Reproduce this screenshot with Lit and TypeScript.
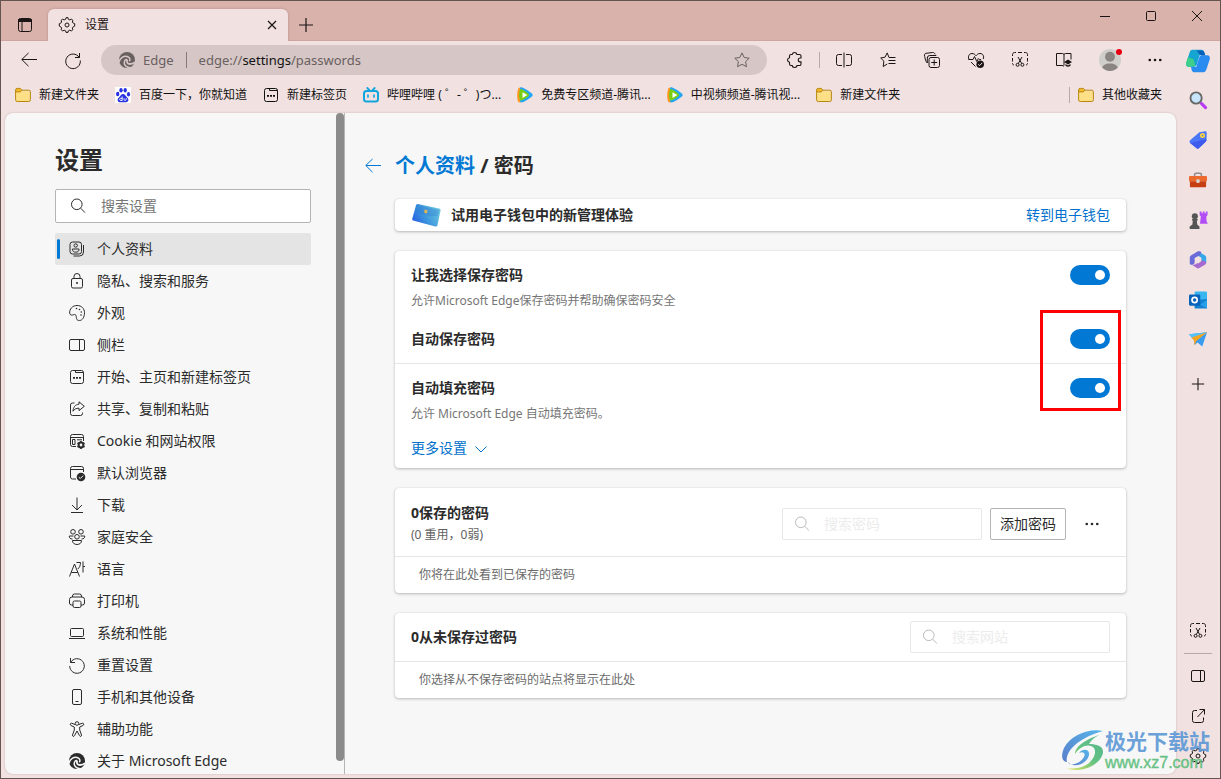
import { LitElement, html, svg, css, nothing, TemplateResult } from "lit";
import { customElement, property } from "lit/decorators.js";
import { classMap } from "lit/directives/class-map.js";

/* ---------- icon set: every glyph is drawn on a 16 x 16 grid ---------- */

const GEAR = svg`<path d="M6.7 2.2 7 .7h2l.3 1.5 1.5.7 1.6-.7 1.5 1.1-.5 1.7.9 1.2 1.4.5v2.4l-1.4.6-.9 1.4.5 1.6-1.5 1.2-1.6-.7-1.5.7-.3 1.5H7l-.3-1.5-1.5-.7-1.6.7-1.5-1.2.5-1.6-.9-1.4-1.4-.6V6.7l1.4-.5.9-1.2-.5-1.7 1.5-1.1 1.6.7z"/><circle cx="8" cy="8" r="2"/>`;
const SCISSORS_BOX = svg`<path d="M.5 4V2.600C.5 1.500 1.400.5 2.500.5H4M6 .5h4M12 .5h1.500c1.100 0 2 .900 2 2V4M15.500 6v3.500M15.500 11v.500c0 .800-.700 1.500-1.500 1.500M.5 6v3.500M.5 11v.500c0 .800.700 1.500 1.500 1.500"/><path d="M6 5l3.700 6.500M10 5l-3.700 6.500"/><circle cx="5.600" cy="12.800" r="1.500"/><circle cx="10.400" cy="12.800" r="1.500"/>`;
const SWIRL = svg`<circle cx="8" cy="8" r="8" fill="currentColor" stroke="none"/><path d="M0 10.500C.800 5.500 5.500 3.300 9 4.800c2 1 2.600 3.200 1.200 4.400" stroke="var(--cut)" stroke-width="1.500"/><path d="M12.500 15.800C7 16.200 4.300 12.200 5.500 9.200c.600-1.500 1.800-2 2.600-1.600" stroke="var(--cut)" stroke-width="1.500"/><path d="M8.300 7.600c-1.200 2.400.200 4.400 2.700 4.400 1.800 0 3.600-.600 5-1.900" stroke="var(--cut)" stroke-width="1.800"/>`;
const NEW_TAB = svg`<rect x="1.500" y="1.500" width="13" height="13" rx="2"/><path d="M6.500 1.500v2h8"/><path d="M4 8.800h2M7 8.800h2M10 8.800h2" stroke-width="1.800"/>`;
const PANEL = svg`<rect x=".5" y="2.500" width="15" height="11" rx="1.500"/><path d="M10.500 2.500v11"/>`;
const SEARCH = svg`<circle cx="6.800" cy="6.300" r="5.300"/><path d="M10.700 10.200 15 14.600"/>`;
const DOTS = svg`<g fill="currentColor" stroke="none"><circle cx="2" cy="8" r="1.500"/><circle cx="8" cy="8" r="1.500"/><circle cx="14" cy="8" r="1.500"/></g>`;
const FOLDER = svg`<path d="M.600 4.200h14.200v8.600a1.700 1.700 0 0 1-1.700 1.700H2.300A1.700 1.700 0 0 1 .600 12.800z" fill="#fddf86" stroke="none"/><path d="M.600 3A1.600 1.600 0 0 1 2.200 1.400h3L7 3.200 5.400 4.900H.600z" fill="#f3b92c" stroke="none"/><path d="M.600 3A1.600 1.600 0 0 1 2.200 1.400h3L7 3.200h6.800a1.600 1.600 0 0 1 1.600 1.600v8a1.700 1.700 0 0 1-1.700 1.700H2.300A1.700 1.700 0 0 1 .600 12.800zM.600 4.900h4.700L7 3.200" stroke="#b8860f"/>`;
const PLAY = svg`<path d="M4.500.9C2.900 0 1.300.7 1 2.500-.1 6 .0 11 .9 14c.4 1.500 1.800 1.700 3.200 1z" fill="#ff9420" stroke="none"/><path d="M3 .9c1-.9 2-.5 3.400.1 3.200 1.500 6 3.300 8.500 5.500 1.100 1 1.100 2.100 0 3.100-2.500 2.200-5.300 4-8.500 5.400-1.300.6-2.700.8-3.400-.4z" fill="#25a5f5" stroke="none"/><path d="M2.600 3.500c.4-1.100 1.200-1.400 2.400-.9 2.400 1.100 4.300 2.300 6.100 3.900 1.100 1 1.100 2 0 3-1.800 1.500-3.700 2.800-6.100 3.800-1.200.5-2 .1-2.400-1-.7-3-.7-5.800 0-8.800z" fill="#78ce12" stroke="none"/><path d="M5.500 5.200 10.300 8l-4.800 2.900z" fill="#fff" stroke="none"/>`;

const ICONS: Record<string, TemplateResult<2>> = {
  gear: GEAR,
  snip: SCISSORS_BOX,
  edge: SWIRL,
  newtab: NEW_TAB,
  panel: PANEL,
  search: SEARCH,
  dots: DOTS,
  folder: FOLDER,
  play: PLAY,
  workspaces: svg`<rect x="1.500" y="1.500" width="13" height="13" rx="2"/><path d="M1.500 2.500h13v2h-13z" fill="currentColor"/><path d="M5 4.500v10"/>`,
  close: svg`<path d="M4 4l8 8M12 4l-8 8" stroke-width="1.200"/>`,
  plus: svg`<path d="M8 1v14M1 8h14" stroke-width="1.200"/>`,
  minimize: svg`<path d="M3 8.500h10"/>`,
  maximize: svg`<rect x="3.500" y="3.500" width="9" height="9" rx="1"/>`,
  winclose: svg`<path d="M3 3l10 10M13 3 3 13"/>`,
  back: svg`<path d="M16 7.500H.8M7.500 1 .8 7.500l6.700 6.700"/>`,
  reload: svg`<path d="M14.500 1v4.500h-4.500M14.200 5.400A7.300 7.300 0 1 0 15.300 8.500"/>`,
  star: svg`<path d="M8 .9l2.200 4.600 5 .7-3.600 3.500.9 5L8 12.300l-4.500 2.400.9-5L.8 6.200l5-.7z"/>`,
  puzzle: svg`<path d="M5.200 2.500C5.500 1.200 6.300.5 7.500.5s2.200.7 2.400 2h2.600a1.500 1.500 0 0 1 1.500 1.500v2h-.8a1.900 1.900 0 0 0 0 3.900h.8V12a1.500 1.500 0 0 1-1.500 1.500H10c-.1 1.200-1.100 2-2.400 2s-2.300-.8-2.400-2H4A1.500 1.500 0 0 1 2.500 12v-1.800C1.200 10 .5 9.200.5 8s.700-2 2-2.200V4A1.500 1.500 0 0 1 4 2.500z" stroke-width="1.100"/>`,
  split: svg`<path d="M6 2.500H2.500a2 2 0 0 0-2 2v7a2 2 0 0 0 2 2H6M10 2.500h3.500a2 2 0 0 1 2 2v7a2 2 0 0 1-2 2H10M8 .5v15"/>`,
  favs: svg`<path d="M9 5.500 7.200.9 5 5.200.7 6l3.200 3.200-.7 5.300 4-2.500"/><path d="M9 5.500h6.500M8.500 8.500h7M8.500 11.500h7"/>`,
  collections: svg`<rect x="5" y="5.500" width="10.500" height="10" rx="2"/><path d="M10.200 7.500v6M7.200 10.500h6"/><path d="M3.300 11C1.500 9.800.5 4 .5 3c0-1 .6-1.500 1.500-1.700L8.700.5c1.300 0 2 .6 2.300 1.800M3.300 11V6a2.500 2.500 0 0 1 2.500-2.500h6.500"/>`,
  health: svg`<path d="M1.500 8C-.5 5.500.5 1.500 4 1.500c2 0 3 1 4 2.200 1-1.200 2-2.200 4-2.200 3.200 0 4.300 3 3.200 5.500M3 10l4.500 4.500M.5 7.500H5l1.500-3 2.300 5 1.500-3 1 1H13"/><circle cx="12.200" cy="12.200" r="3.800" fill="currentColor" stroke="none"/><path d="M10.200 12.300l1.400 1.300 2.600-2.700" stroke="#f1e2e1"/>`,
  reader: svg`<path d="M8 3v10.500M8 3C8 2 7.500 1.500 6.500 1.500h-6v12H6c1 0 1.500.3 2 1M8 3c0-1 .5-1.500 1.500-1.500h5.500V7.500"/><path d="M12 7.500 16 10l-4 2.400L8 10zM9.500 12v1.700c1.500 1.300 3.500 1.300 5 0V12L12 13.500z" fill="currentColor" stroke="none"/>`,
  profile: svg`<path d="M4.500 15h6a4 4 0 0 0 4-4V4"/><rect x="1" y="1" width="11.500" height="12" rx="2.500"/><circle cx="6.700" cy="4.500" r="1.700"/><path d="M3.500 8h6.500v.8c0 1.400-1.300 2.400-3.200 2.400s-3.300-1-3.300-2.400z"/>`,
  lock: svg`<rect x="2.500" y="5.500" width="11" height="9.500" rx="1.500"/><path d="M5 5.500V3.500a3 3 0 0 1 6 0v2"/><circle cx="8" cy="10" r="1" fill="currentColor" stroke="none"/>`,
  palette: svg`<path d="M.7 8.500C.2 4 3.500.5 8 .5c4.500 0 7.500 3 7.500 7.200 0 4.500-2.200 7.800-5 7.800-3.500 0-3-2.500-3.300-4.300C7 9.500 6 9.300 4.600 9.700 3 10.200 1.200 10.500.7 8.500z"/><g fill="currentColor" stroke="none"><circle cx="7.500" cy="3.500" r=".8"/><circle cx="10.500" cy="4.500" r=".8"/><circle cx="12.300" cy="7" r=".8"/><circle cx="12" cy="10" r=".8"/></g>`,
  share: svg`<path d="M5.500 2H3.500a2 2 0 0 0-2 2v8.500a2 2 0 0 0 2 2h8a2 2 0 0 0 2-2v-1"/><path d="M10 .8l5.300 4.500L10 9.600V7.200C7.200 7.200 5.500 8 4 10.200 4.200 6.500 6 3.500 10 3.200z"/>`,
  cookie: svg`<path d="M14.500 8V3.500a2 2 0 0 0-2-2h-9a2 2 0 0 0-2 2v8a2 2 0 0 0 2 2H7M1.500 4.500h13M3.500 6.500h2.500v5H3.500zM8 6.800h5"/><circle cx="12" cy="12" r="2.400" stroke-width="2"/><path d="M12 8v1.500M12 14.500V16M8.500 10l1.300.8M14.200 13.200l1.300.8M8.500 14l1.300-.8M14.200 10.800l1.300-.8" stroke-width="1.600"/>`,
  browser: svg`<path d="M14.500 7V3.500a2 2 0 0 0-2-2h-9a2 2 0 0 0-2 2v8.500a2 2 0 0 0 2 2H7M1.500 4.500h13"/><circle cx="12" cy="12" r="4.300" fill="currentColor" stroke="none"/><path d="M9.800 12.200l1.500 1.300 2.800-2.800" stroke="#f7f7f7"/>`,
  download: svg`<path d="M8 .5v12M3 8l5 5 5-5M2 15.500h12"/>`,
  family: svg`<circle cx="4" cy="2.800" r="2.300"/><circle cx="12" cy="2.800" r="2.300"/><circle cx="8" cy="7.800" r="2.300"/><path d="M3.500 10C1.500 10 0 9 .3 7h4.200M12.500 10c2 0 3.500-1 3.200-3h-4.200M3.500 11.500h9c.2 2.500-2 4-4.500 4s-4.700-1.500-4.500-4z"/>`,
  language: svg`<path d="M.5 15.500 5.500 3l5 12.500M2.300 11.500h6.500M7.500 1.500h4c0 3-1 5-2.700 6.500M14 .5v11M14 5.500h2"/>`,
  printer: svg`<path d="M3.500 4V3a2 2 0 0 1 2-2h5a2 2 0 0 1 2 2v1M4 12H2.500a2 2 0 0 1-2-2V6.500a2.500 2.500 0 0 1 2.500-2.500h10a2.500 2.500 0 0 1 2.500 2.500V10a2 2 0 0 1-2 2H12"/><rect x="4" y="8" width="8" height="6.500" rx="1.500"/>`,
  laptop: svg`<rect x="1.500" y="3.500" width="13" height="8" rx="1"/><path d="M0 13.500h16"/>`,
  reset: svg`<path d="M1.500 1v4.500H6M1.700 5.300A7.300 7.300 0 1 1 .7 9"/>`,
  phone: svg`<rect x="3.500" y=".5" width="9" height="15" rx="1.500"/><path d="M6.500 12.500h3"/>`,
  access: svg`<circle cx="8" cy="2.500" r="1.800"/><path d="M6 3.500 2.700 2.200C1 2 .8 4 2 4.500l3.300 1.500v3L3.500 14c-.3 1.500 1.500 2 2 .7L8 10l2.500 4.700c.5 1.300 2.300.8 2-.7L10.700 9V6L14 4.500c1.200-.5 1-2.500-.7-2.300L10 3.500"/>`,
  external: svg`<path d="M7 2.500H4.500a2 2 0 0 0-2 2v8a2 2 0 0 0 2 2h7a2 2 0 0 0 2-2V9.500M9.500 1.500H14.500v5M14.500 1.500l-7 7.500"/>`,
  sidebar: svg`<rect x="1.500" y="2.500" width="13" height="11" rx="1.500"/><path d="M10.500 2.500v11"/>`,
  chevron: svg`<path d="M2.500 6.500l5.500 5.500 5.500-5.500"/>`,
  baidu: svg`<rect width="16" height="16" fill="#fff" stroke="none"/><g fill="#2932e1" stroke="none"><ellipse cx="2.700" cy="7" rx="1.700" ry="2.200"/><ellipse cx="6" cy="3.200" rx="1.700" ry="2.300"/><ellipse cx="10.200" cy="3.300" rx="1.700" ry="2.300"/><ellipse cx="13.500" cy="7.300" rx="1.600" ry="2.200"/><path d="M8 7c1.800 0 2.500 1.800 3.700 2.900 1.500 1.300 2 2.500 1.500 3.900-.600 1.700-2.700 1.400-5.200 1.400s-4.500.400-5.200-1.300c-.500-1.500.100-2.700 1.600-3.900C5.600 8.900 6.200 7 8 7z"/></g><path d="M7.200 9.500v4H5.700c-1.400 0-1.400-2.200 0-2.200h1.500M9 11.200v1.500c0 .900 2.200.900 2.200 0v-1.500" stroke="#fff" stroke-width=".9"/>`,
  bili: svg`<g stroke="#13a5dd"><rect x="1" y="4" width="14" height="10.500" rx="2.500" stroke-width="2"/><path d="M4.300 1l2 2M11.700 1l-2 2" stroke-width="1.800" stroke-linecap="round"/><path d="M5 8v2M11 8v2" stroke-width="1.700" stroke-linecap="round"/></g>`,
  avatar: svg`<circle cx="8" cy="8" r="8" fill="#d0cecb" stroke="none"/><circle cx="8" cy="5.600" r="3.600" fill="#8a8582" stroke="none"/><path d="M2.300 13.500C3 11.700 4.500 10.500 8 10.500s5 1.200 5.700 3A8 8 0 0 1 8 16a8 8 0 0 1-5.700-2.500z" fill="#8a8582" stroke="none"/>`,
  copilot: svg`<g stroke="none"><path d="M4.300.5h6c1.200 0 1.700.8 2 1.900l.5 1.800H11c-1.200 0-1.900.8-2.300 2L6.900 11.900H1.800C.3 11.900-.2 10.500.2 9L2.300 2.600C2.700 1.300 3.300.5 4.300.5z" fill="#16a4d0"/><path d="M1.300 5.500l3.800 1.300 1.300 5.100H1.800C.3 11.900-.2 10.500.2 9z" fill="#3ecf8b"/><path d="M11.700 15.500h-6c-1.200 0-1.700-.8-2-1.900l-.4-1.700H5c1.200 0 1.900-.8 2.300-2L9.100 4.100h5.100c1.500 0 2 1.400 1.600 2.900l-2.100 6.400c-.4 1.300-1 2.100-2 2.100z" fill="#2a8cf0"/><path d="M7 1h3.300c1.200 0 1.700.7 2 1.600l.5 1.600H9.500z" fill="#0b5fb8"/><path d="M10.700 4.200c-1.200 0-1.700.9-2 2L6.900 11.900H5.200c1.200 0 1.800-.9 2.200-2l1.700-5.700z" fill="#e8f6ff"/></g>`,
  bing: svg`<circle cx="6.300" cy="6.200" r="5" fill="#c7e6fb" stroke="#696969" stroke-width="1.700"/><path d="M9.900 10l1.700 1.500" stroke="#777" stroke-width="1.700"/><path d="M11.200 11.200l3.500 3.500" stroke="#b73cf2" stroke-width="2.800" stroke-linecap="round"/>`,
  tag: svg`<path d="M9.200 1.100 14.300.3c1 0 1.500.6 1.500 1.400l-.3 6.500c0 .6-.3 1-.7 1.400L9 15.200c-.8.8-1.800.8-2.500 0L1 10.600c-.8-.7-.8-1.600 0-2.300z" fill="#4b77f7" stroke="none"/><path d="M1 10.600 15.400 7l.1 1.200c0 .6-.3 1-.7 1.400L9 15.200c-.8.800-1.800.800-2.500 0z" fill="#3f5bee" stroke="none"/><circle cx="12" cy="4" r="1.500" stroke="#ffd43a" stroke-width="1.500"/>`,
  toolbox: svg`<path d="M5 5V3.200C5 2.500 5.500 2 6.200 2h3.600c.700 0 1.200.500 1.200 1.200V5" stroke="#8e8c8c" stroke-width="1.400"/><path d="M0 5.500C0 5 .400 4.500 1 4.500h14c.600 0 1 .500 1 1V9H0z" fill="#ec6a2e" stroke="none"/><path d="M.800 9h14.400v4.500c0 .600-.400 1-1 1H1.800c-.600 0-1-.400-1-1z" fill="#c63e11" stroke="none"/><rect x="6.500" y="7.300" width="3" height="3.400" rx="1" fill="#d8d4d0" stroke="none"/>`,
  chess: svg`<path d="M9.500.5h1.700V2h1V.5h1.700V2h1V.5h1.600v3.200l-1 1v4l1.200 2.600H9.800L10.500 4.700l-1-1z" fill="#b24df5" stroke="none"/><g fill="#555" stroke="none"><circle cx="5.200" cy="4.700" r="2.700"/><path d="M2.700 7.200h5v1.300H6.900l.4 3.500 2 1.700V16H.6v-2.300L3 12l.4-3.500h-.7z"/></g>`,
  m365: svg`<g stroke="none"><path d="M8 .3 14 3.800c.800.500 1.300 1.200 1.300 2V11L11 8.300V6L6.500 3.300z" fill="#35a8ea"/><path d="M8 .300 2 3.800C1.200 4.300.700 5 .700 5.900v5.200c0 .600.800 1.200 1.800 1.200 1.200 0 2.300-.900 2.500-1.800V6.300L10 3.500 11 .800C10 0 9 0 8 .300z" fill="#6a6bd8"/><path d="M2.500 12.300 7 15.200c.700.400 1.500.4 2.200 0l5-3c1-.700 1.300-1.600.9-2.600L11 8.300 5.500 12z" fill="#a56bd0"/><path d="M8 5.200l2.500 1.400v2.900L8 11 5.500 9.500V6.600z" fill="#f1e2e1"/></g>`,
  outlook: svg`<rect x="5" y=".5" width="11" height="14" rx="1" fill="#37b5f1" stroke="none"/><path d="M5 8l11-1v8.500H5z" fill="#1482d2" stroke="none"/><path d="M10 12l6-4v7.500z" fill="#27a0ea" stroke="none"/><rect x="0" y="3" width="10" height="10" rx="1" fill="#0a63b8" stroke="none"/><circle cx="5" cy="8" r="2.300" stroke="#fff" stroke-width="1.500"/>`,
  drop: svg`<path d="M0 2.800 16 1 11.800 13.800 7.600 10.300 5 12.500 4.300 8z" fill="#3a9cf0" stroke="none"/><path d="M0 2.800 16 1 4.300 8z" fill="#55c2fa" stroke="none"/><path d="M2 6l14-5-9.700 8L5 12.800 4.300 8z" fill="#f8a51b" stroke="none"/>`,
};

function icon(name: string, size = 16) {
  return html`<svg class="ico" viewBox="0 0 16 16" width=${size} height=${size} fill="none" stroke="currentColor" aria-hidden="true">${ICONS[name]}</svg>`;
}

const base = css`
  :host, * { box-sizing: border-box; }
  .ico { display: block; flex: none; overflow: visible; }
  button, input { font: inherit; color: inherit; margin: 0; }
  button { padding: 0; border: 0; background: none; display: grid; place-items: center; }
  a { color: inherit; text-decoration: none; }
`;

/* ---------- window caption with the tab strip ---------- */

@customElement("tab-strip")
class TabStrip extends LitElement {
  static styles = [base, css`
    :host { display: flex; height: 40px; background: #d9b2ac; color: #1b1414; box-shadow: inset 0 -1px #cfa49f; }
    .work { width: 47px; padding-top: 8px; }
    .tab { display: flex; align-items: center; gap: 10px; width: 240px; margin-top: 8px; padding: 0 8px 0 11px; border-radius: 6px 6px 0 0; background: #f1e2e1; box-shadow: 0 0 3px #b98f8a; clip-path: inset(-4px -4px 0 -4px); }
    .name { flex: 1; font-size: 12px; line-height: 16px; }
    .new { width: 36px; padding-top: 7px; }
    .window { display: flex; margin-left: auto; }
    .window button { width: 46px; height: 30px; }
  `];
  render() {
    return html`
      <button class="work" aria-label="标签页操作">${icon("workspaces")}</button>
      <div class="tab">${icon("gear")}<span class="name">设置</span><button aria-label="关闭标签页">${icon("close")}</button></div>
      <button class="new" aria-label="新建标签页">${icon("plus")}</button>
      <div class="window">
        <button aria-label="最小化">${icon("minimize")}</button>
        <button aria-label="最大化">${icon("maximize")}</button>
        <button aria-label="关闭">${icon("winclose")}</button>
      </div>`;
  }
}

/* ---------- address bar row ---------- */

@customElement("tool-bar")
class ToolBar extends LitElement {
  static styles = [base, css`
    :host { display: flex; align-items: center; height: 38px; padding-left: 6px; color: #1b1414; }
    .btn { width: 44px; height: 38px; flex: none; }
    .address { display: flex; align-items: center; flex: 1; height: 30px; margin: 0 6px; padding: 0 17px 0 18px; border-radius: 15px; background: #d6c7c6; color: #696060; font-size: 14px; line-height: 20px; --cut: #d6c7c6; }
    .site { margin-left: 8px; font-size: 13px; }
    .bar { width: 1px; height: 16px; margin: 0 12px; background: #857b7a; }
    .path { flex: 1; font-size: 13px; }
    .path b { color: #111; font-weight: 400; }
    .sep { width: 1px; height: 16px; margin: 0 2px; background: #b9a9a8; flex: none; }
    .person { position: relative; width: 48px; height: 38px; flex: none; }
    .dot { position: absolute; top: 8px; right: 12px; width: 6px; height: 6px; border-radius: 50%; background: #e6000f; }
    .more { width: 42px; height: 38px; }
  `];
  render() {
    return html`
      <button class="btn" aria-label="返回">${icon("back")}</button>
      <button class="btn" aria-label="刷新">${icon("reload")}</button>
      <div class="address">
        ${icon("edge")}<span class="site">Edge</span><span class="bar"></span>
        <span class="path">edge://<b>settings</b>/passwords</span>
        <button aria-label="收藏">${icon("star")}</button>
      </div>
      <button class="btn" aria-label="扩展">${icon("puzzle")}</button>
      <span class="sep"></span>
      ${["split", "favs", "collections", "health", "snip", "reader"].map((n) => html`<button class="btn" aria-label=${n}>${icon(n)}</button>`)}
      <button class="person" aria-label="个人资料">${icon("avatar", 22)}<span class="dot"></span></button>
      <button class="more" aria-label="更多">${icon("dots", 14)}</button>`;
  }
}

/* ---------- favourites row ---------- */

const MARKS: [string, string][] = [
  ["folder", "新建文件夹"],
  ["baidu", "百度一下，你就知道"],
  ["newtab", "新建标签页"],
  ["bili", "哔哩哔哩 ( ゜- ゜)つ..."],
  ["play", "免费专区频道-腾讯..."],
  ["play", "中视频频道-腾讯视..."],
  ["folder", "新建文件夹"],
];

@customElement("favorites-bar")
class FavoritesBar extends LitElement {
  static styles = [base, css`
    :host { display: flex; align-items: center; height: 33px; padding: 0 6px 2px; color: #111; font-size: 12px; line-height: 16px; white-space: nowrap; }
    .mark { display: flex; align-items: center; gap: 8px; padding: 0 8px; }
    .sep { width: 1px; height: 16px; margin-left: auto; background: #b9a9a8; }
  `];
  render() {
    return html`
      ${MARKS.map(([i, t]) => html`<a class="mark" href="#">${icon(i)}<span>${t}</span></a>`)}
      <span class="sep"></span>
      <a class="mark" href="#">${icon("folder")}<span>其他收藏夹</span></a>`;
  }
}

/* ---------- settings navigation ---------- */

const NAV: [string, string][] = [
  ["profile", "个人资料"],
  ["lock", "隐私、搜索和服务"],
  ["palette", "外观"],
  ["panel", "侧栏"],
  ["newtab", "开始、主页和新建标签页"],
  ["share", "共享、复制和粘贴"],
  ["cookie", "Cookie 和网站权限"],
  ["browser", "默认浏览器"],
  ["download", "下载"],
  ["family", "家庭安全"],
  ["language", "语言"],
  ["printer", "打印机"],
  ["laptop", "系统和性能"],
  ["reset", "重置设置"],
  ["phone", "手机和其他设备"],
  ["access", "辅助功能"],
  ["edge", "关于 Microsoft Edge"],
];

@customElement("settings-nav")
class SettingsNav extends LitElement {
  static styles = [base, css`
    :host { display: flex; width: 340px; flex: none; border-right: 1px solid #b5b5b5; color: #2b2b2b; font-size: 14px; line-height: 20px; --cut: #f7f7f7; }
    .pane { flex: 1; min-width: 0; padding: 30px 25px 0 50px; overflow: hidden; }
    h1 { margin: 0 0 12px; font-size: 24px; line-height: 34px; font-weight: 700; }
    .search { display: flex; align-items: center; gap: 15px; height: 34px; margin-bottom: 10px; padding: 0 14px; border: 1px solid #b4b4b4; border-radius: 2px; background: #fff; }
    .search input { flex: 1; min-width: 0; padding: 0; border: 0; outline: 0; background: none; }
    .search input::placeholder { color: #767676; opacity: 1; }
    ul { margin: 0; padding: 0; list-style: none; }
    .link { display: flex; align-items: center; gap: 12px; height: 32px; padding-left: 14px; border-radius: 2px; }
    .link.on { padding-left: 2px; gap: 9px; background: #e4e4e4; }
    .link.on::before { content: ""; width: 3px; height: 20px; border-radius: 2px; background: #0078d4; }
    .link.on .label { padding-left: 3px; }
    .track { width: 8px; flex: none; }
    .thumb { height: 98%; border-radius: 4px; background: #8b8b8b; }
  `];
  render() {
    return html`
      <div class="pane">
        <h1>设置</h1>
        <label class="search">${icon("search")}<input type="text" placeholder="搜索设置" aria-label="搜索设置" /></label>
        <ul>
          ${NAV.map(([i, t], n) => html`<li><a href="#" class=${classMap({ link: true, on: n === 0 })}>${icon(i)}<span class="label">${t}</span></a></li>`)}
        </ul>
      </div>
      <div class="track"><div class="thumb"></div></div>`;
  }
}

/* ---------- on/off row inside a card ---------- */

@customElement("toggle-row")
class ToggleRow extends LitElement {
  @property() heading = "";
  @property() note = "";
  static styles = [base, css`
    :host { display: block; padding: 12px 16px; }
    .head { display: flex; align-items: center; justify-content: space-between; height: 24px; color: #2b2b2b; font-size: 14px; font-weight: 700; }
    .switch { appearance: none; display: flex; align-items: center; justify-content: flex-end; width: 40px; height: 20px; padding: 0 5px; border-radius: 10px; background: #0078d4; }
    .switch::before { content: ""; width: 10px; height: 10px; border-radius: 50%; background: #fff; }
    .switch:not(:checked) { justify-content: flex-start; background: #8a8a8a; }
    .note { margin: 4px 0 0; color: #767676; font-size: 12px; line-height: 20px; }
  `];
  render() {
    return html`
      <label class="head"><span>${this.heading}</span><input class="switch" type="checkbox" role="switch" checked /></label>
      ${this.note ? html`<p class="note">${this.note}</p>` : nothing}`;
  }
}

/* ---------- passwords page ---------- */

@customElement("password-page")
class PasswordPage extends LitElement {
  static styles = [base, css`
    :host { flex: 1; min-width: 0; display: flex; flex-direction: column; gap: 20px; padding: 40px 50px 0; color: #2b2b2b; font-size: 14px; line-height: 20px; }
    .title { display: flex; align-items: center; gap: 14px; margin-left: -30px; color: #0078d4; }
    h2 { margin: 0; font-size: 20px; line-height: 26px; font-weight: 700; color: #2b2b2b; }
    h2 a { color: #0078d4; }
    .card { position: relative; border-radius: 4px; background: #fff; box-shadow: 0 1px 3px rgb(0 0 0 / 25%), 0 0 1px rgb(0 0 0 / 15%); }
    .promo { display: flex; align-items: center; gap: 10px; height: 32px; padding: 0 16px; font-weight: 700; }
    .promo a { margin-left: auto; }
    .blue { color: #0071cc; font-weight: 400; }
    .line { border-top: 1px solid #e5e5e5; }
    .flush { padding-top: 4px; }
    .more { display: flex; align-items: center; gap: 6px; margin: 2px 0 0 16px; padding-bottom: 10px; }
    .mark { position: absolute; top: 59px; right: 5px; width: 81px; height: 101px; border: 3px solid #f00; pointer-events: none; }
    .head { display: flex; align-items: center; gap: 8px; height: 68px; padding: 4px 16px 0; }
    .head.small { height: 48px; padding-top: 0; }
    .names { flex: 1; font-weight: 700; }
    .names p { margin: 2px 0 0; color: #616161; font-size: 12px; font-weight: 400; }
    .find { display: flex; align-items: center; gap: 14px; width: 200px; height: 32px; padding: 0 11px; border: 1px solid #e8e8e8; border-radius: 2px; color: #bbb; }
    .find input { flex: 1; min-width: 0; padding: 0; border: 0; background: none; }
    .find input::placeholder { color: #ececec; opacity: 1; }
    .add { width: 76px; height: 32px; border: 1px solid #b4b4b4; border-radius: 2px; }
    .dots { width: 36px; height: 32px; }
    .empty { margin: 0; padding: 8px 24px; color: #6b6b6b; font-size: 12px; }
  `];
  render() {
    return html`
      <div class="title">${icon("back")}<h2><a href="#">个人资料</a> / 密码</h2></div>
      <section class="card promo">
        <svg class="ico" width="30" height="26" viewBox="0 0 30 26" aria-hidden="true">
          <defs><linearGradient id="w" x1="0" y1="1" x2="1" y2=".5"><stop offset="0" stop-color="#2352e6"/><stop offset=".5" stop-color="#3a92dd"/><stop offset="1" stop-color="#67c3e0"/></linearGradient></defs>
          <path d="M7 2l21 4.500c1.300.3 1.800 1 1.500 2.200l-3 14.300c-.3 1.300-1 1.700-2.200 1.500L3 18.800c-1.500-.4-2-1-1.700-2.300L5 3.300C5.400 2.200 6 1.800 7 2z" fill="url(#w)"/>
          <path d="M6 3l22 5-1.500 6C20 15 13 13 5 10z" fill="#2c79d2" opacity=".35"/>
          <path d="M13.500 7.500l3 .8-.6 3.200-2.600-.8z" fill="#e2b650"/>
        </svg>
        <span>试用电子钱包中的新管理体验</span><a class="blue" href="#">转到电子钱包</a>
      </section>
      <section class="card">
        <toggle-row heading="让我选择保存密码" note="允许Microsoft Edge保存密码并帮助确保密码安全"></toggle-row>
        <toggle-row class="flush" heading="自动保存密码"></toggle-row>
        <div class="line"></div>
        <toggle-row heading="自动填充密码" note="允许 Microsoft Edge 自动填充密码。"></toggle-row>
        <button class="more blue"><span>更多设置</span>${icon("chevron")}</button>
        <div class="mark"></div>
      </section>
      <section class="card">
        <div class="head">
          <div class="names">0保存的密码<p>(0 重用，0弱)</p></div>
          <label class="find">${icon("search")}<input type="text" placeholder="搜索密码" aria-label="搜索密码" /></label>
          <button class="add">添加密码</button>
          <button class="dots" aria-label="更多操作">${icon("dots", 14)}</button>
        </div>
        <div class="line"></div>
        <p class="empty">你将在此处看到已保存的密码</p>
      </section>
      <section class="card">
        <div class="head small">
          <div class="names">0从未保存过密码</div>
          <label class="find">${icon("search")}<input type="text" placeholder="搜索网站" aria-label="搜索网站" /></label>
        </div>
        <div class="line"></div>
        <p class="empty">你选择从不保存密码的站点将显示在此处</p>
      </section>`;
  }
}

/* ---------- app sidebar on the right edge ---------- */

@customElement("edge-rail")
class EdgeRail extends LitElement {
  static styles = [base, css`
    :host { display: flex; flex-direction: column; width: 44px; flex: none; color: #1b1414; }
    button { width: 100%; height: 40px; flex: none; }
    .first { height: 39px; }
    .add { height: 48px; }
    .bottom { margin-top: auto; padding-bottom: 2px; }
    hr { width: 28px; height: 1px; margin: 2px auto; border: 0; background: #b9a9a8; }
  `];
  render() {
    return html`
      <button class="first" aria-label="Copilot">${icon("copilot", 24)}</button>
      ${["bing", "tag", "toolbox", "chess", "m365", "outlook", "drop"].map((n) => html`<button aria-label=${n}>${icon(n, 18)}</button>`)}
      <button class="add" aria-label="自定义">${icon("plus", 14)}</button>
      <div class="bottom">
        <button aria-label="截图">${icon("snip")}</button>
        <hr />
        <button aria-label="侧栏">${icon("sidebar")}</button>
        <button aria-label="打开链接">${icon("external")}</button>
        <button aria-label="设置">${icon("gear")}</button>
      </div>`;
  }
}

@customElement("app-root")
class AppRoot extends LitElement {
  static styles = [base, css`
    :host { position: relative; display: flex; flex-direction: column; height: 100vh; overflow: hidden; border: 1px solid #65544f; background: #f1e2e1; font-family: "Noto Sans", "Noto Sans CJK SC", sans-serif; }
    .body { display: flex; flex: 1; min-height: 0; }
    .main { display: flex; flex-direction: column; flex: 1; min-width: 0; }
    .sheet { display: flex; flex: 1; min-height: 0; margin: 1px 0 4px 4px; border-radius: 8px; background: #f7f7f7; box-shadow: 0 0 2px #c2aaa8; overflow: hidden; }
    .stamp { position: absolute; right: 10px; bottom: 6px; display: flex; align-items: center; gap: 1px; pointer-events: none; }
    .words { color: #5c97d6; opacity: .9; font-size: 21px; line-height: 26px; font-weight: 700; }
    .words small { display: block; color: #57bd78; font: 400 16px/18px "Liberation Sans", sans-serif; -webkit-text-stroke: 0.4px #57bd78; }
  `];
  render() {
    return html`
      <tab-strip></tab-strip>
      <div class="body">
        <div class="main">
          <tool-bar></tool-bar>
          <favorites-bar></favorites-bar>
          <div class="sheet"><settings-nav></settings-nav><password-page></password-page></div>
        </div>
        <edge-rail></edge-rail>
      </div>
      <div class="stamp">
        <svg class="ico" width="43" height="42" viewBox="0 0 43 42" aria-hidden="true">
          <defs>
            <linearGradient id="a" x1="0" y1="1" x2="1" y2="0"><stop offset="0" stop-color="#5b7fcb"/><stop offset="1" stop-color="#56b4ea"/></linearGradient>
            <linearGradient id="b" x1="0" y1="1" x2="1" y2="0"><stop offset="0" stop-color="#e9e45c"/><stop offset=".5" stop-color="#63c383"/><stop offset="1" stop-color="#58b48f"/></linearGradient>
          </defs>
          <path d="M42 2C28-1 10 6 3 19c-4 9-1 14 3 14C4 24 14 10 42 2z" fill="url(#a)"/>
          <path d="M7 33c1 5 12 2 16-5 2-4-1-6-5-4 4-5 11-4 10 2-2 9-16 14-21 7z" fill="url(#a)"/>
          <path d="M38 6C26 10 14 17 14 25c4-7 12-10 16-8 8 3 3 15-5 19-7 4-14 4-20 3 12 5 30 0 36-12 4-9-4-12-13-12 2-4 6-7 10-9z" fill="url(#b)"/>
        </svg>
        <div class="words">极光下载站<small>www.xz7.com</small></div>
      </div>`;
  }
}
